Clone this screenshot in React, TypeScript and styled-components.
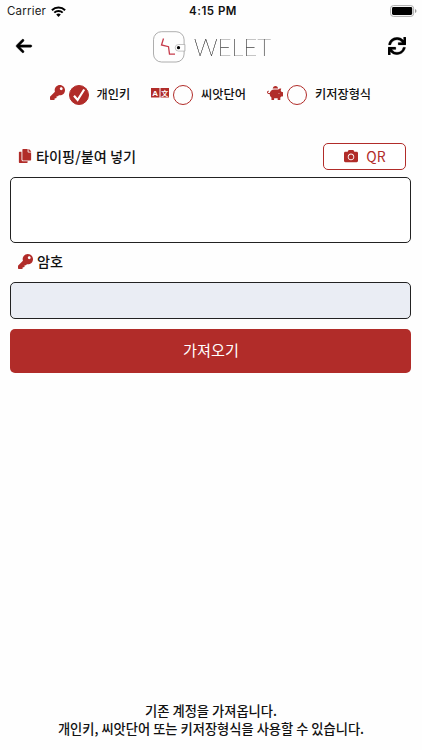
import React from 'react';
import styled, { createGlobalStyle } from 'styled-components';
import { FaKey, FaPiggyBank, FaCopy, FaCamera, FaSync } from 'react-icons/fa';
import { FaArrowLeft } from 'react-icons/fa6';

const RED = '#b12c29';

const GlobalStyle = createGlobalStyle`
  * { box-sizing: border-box; }
  body {
    margin: 0;
    background: #fefefe;
    color: #111;
    font-family: "Noto Sans CJK KR", sans-serif;
  }
  svg { display: block; flex: none; }
`;

const Screen = styled.main`
  width: 422px;
  height: 750px;
  display: flex;
  flex-direction: column;
  overflow: hidden;
`;

const StatusBar = styled.div`
  height: 22px;
  flex: none;
  display: grid;
  grid-template-columns: 1fr auto 1fr;
  align-items: center;
  padding: 0 5px 0 7px;
  font-family: Inter, sans-serif;
  font-size: 11.5px;
  line-height: 22px;
`;

const Carrier = styled.div`
  display: flex;
  align-items: center;
  gap: 5px;
  letter-spacing: 0.2px;
  color: #222;
`;

const Clock = styled.div`
  font-weight: 600;
  letter-spacing: 0.5px;
  padding-left: 2px;
`;

const Battery = styled.div`
  display: flex;
  justify-content: flex-end;
`;

const Header = styled.header`
  height: 50px;
  flex: none;
  display: flex;
  align-items: center;
  justify-content: space-between;
  padding: 0 16px 3px 15px;
`;

const IconButton = styled.button`
  border: 0;
  padding: 0;
  background: none;
  color: #000;
  font-size: 18px;
`;

const Brand = styled.div`
  display: flex;
  align-items: center;
  gap: 7px;
  padding: 2px 0 0 1px;
`;

const Options = styled.div`
  height: 46px;
  flex: none;
  display: flex;
  padding-left: 50px;
`;

const Option = styled.div<{ $width: number }>`
  width: ${({ $width }) => $width}px;
  display: flex;
  align-items: flex-start;
  padding-top: 13px;
  color: ${RED};
`;

const OptionIcon = styled.span<{ $drop?: number }>`
  padding-top: ${({ $drop = 0 }) => $drop}px;
`;

const Radio = styled.span<{ $checked?: boolean; $offset: number }>`
  width: 20px;
  height: 20px;
  margin: 0 8px 0 ${({ $offset }) => $offset}px;
  flex: none;
  border: 1px solid ${RED};
  border-radius: 50%;
  background: ${({ $checked }) => ($checked ? RED : 'transparent')};
`;

const OptionText = styled.span`
  font-size: 12.2px;
  font-weight: 500;
  line-height: 18px;
  color: #111;
  white-space: nowrap;
`;

const Form = styled.section`
  display: flex;
  flex-direction: column;
  padding: 25px 11px 0 10px;
`;

const FieldHead = styled.div<{ $height: number; $gap: number }>`
  height: ${({ $height }) => $height}px;
  margin-bottom: ${({ $gap }) => $gap}px;
  display: flex;
  align-items: center;
  justify-content: space-between;
  padding: 0 5px 0 8px;
`;

const Label = styled.label<{ $lift?: number }>`
  display: flex;
  align-items: center;
  gap: 4px;
  padding-bottom: ${({ $lift = 0 }) => $lift}px;
  font-size: 14.2px;
  font-weight: 500;
  line-height: 20px;
  svg { color: ${RED}; }
`;

const QrButton = styled.button`
  width: 83px;
  height: 27px;
  display: flex;
  align-items: center;
  justify-content: center;
  gap: 8px;
  padding: 0 0 2px 1px;
  border: 1px solid ${RED};
  border-radius: 5px;
  background: #fff;
  color: ${RED};
  font: 400 14px/20px "Noto Sans CJK KR", sans-serif;
`;

const KeyArea = styled.textarea`
  display: block;
  height: 66px;
  width: 100%;
  resize: none;
  border: 1px solid #222;
  border-radius: 5px;
  background: #fff;
`;

const PasswordInput = styled.input`
  height: 37px;
  width: 100%;
  border: 1px solid #222;
  border-radius: 5px;
  background: #eaedf4;
`;

const SubmitButton = styled.button`
  height: 44px;
  width: 100%;
  margin-top: 10px;
  padding: 0 0 4px 1px;
  border: 0;
  border-radius: 5px;
  background: ${RED};
  color: #fff;
  font: 400 15.2px/22px "Noto Sans CJK KR", sans-serif;
`;

const Footer = styled.footer`
  margin-top: auto;
  padding-bottom: 12px;
  text-align: center;
  font-size: 13.25px;
  font-weight: 500;
  line-height: 18px;
`;

const WifiIcon = () => (
  <svg width="15" height="11" viewBox="0 0 15 11" fill="none" stroke="#000" strokeWidth="2">
    <path d="M.9 4.2a9.4 9.4 0 0 1 13.2 0M3.3 6.6a6 6 0 0 1 8.4 0" />
    <path d="M5.2 8.6a3.3 3.3 0 0 1 4.6 0L7.5 10.9Z" fill="#000" stroke="none" />
  </svg>
);

const BatteryIcon = () => (
  <svg width="27" height="12" viewBox="0 0 27 12">
    <rect x=".6" y=".6" width="23" height="10.8" rx="2.8" fill="none" stroke="#aaa" />
    <rect x="2" y="2" width="20.2" height="8" rx="1.4" />
    <path d="M25 4c2 .7 2 3.3 0 4Z" fill="#999" />
  </svg>
);

const LogoIcon = () => (
  <svg width="33" height="32" viewBox="0 0 33 32" fill="none">
    <rect x=".5" y=".7" width="30.6" height="30.3" rx="8" stroke="#999" strokeWidth=".8" />
    <path d="M10.5 7.5 8.5 14l7 1.7 1 7.5H22" stroke="#c63b4b" strokeWidth="1.3" />
    <path d="M31.5 13.5h-6a3.3 3.3 0 0 0 0 6.6h6Z" fill="#fff" />
    <path d="M32 13.5h-6.5a3.3 3.3 0 0 0 0 6.6H32Z" stroke="#aaa" strokeWidth=".7" />
    <circle cx="25.5" cy="16.7" r="1.6" fill="#000" />
  </svg>
);

const Wordmark = styled.span`
  width: 77px;
  padding-left: 1px;
  font: 100 23.5px/32px Lato, sans-serif;
  letter-spacing: 0.2px;
  color: #222;
  -webkit-text-stroke: 0.2px #222;
  white-space: nowrap;
  will-change: transform;
`;

const LanguageIcon = () => (
  <svg width="18" height="10" viewBox="0 0 18 10">
    <path d="M0 0h8.5v9.5H0ZM9.5 0H18v9.5H9.5Z" fill={RED} />
    <text x="4.25" y="7.7" textAnchor="middle" fontFamily="Liberation Sans" fontWeight="700" fontSize="8" fill="#fff">A</text>
    <text x="13.75" y="7.5" textAnchor="middle" fontFamily="Noto Sans CJK SC" fontWeight="700" fontSize="7" fill="#fff">文</text>
  </svg>
);

const CheckIcon = () => (
  <svg width="18" height="18" viewBox="0 0 18 18" fill="none" stroke="#fff" strokeWidth="2.2">
    <path d="m4 9.8 3.6 4.2 6.6-10.5" />
  </svg>
);

export default function App() {
  return (
    <>
      <GlobalStyle />
      <Screen>
        <StatusBar>
          <Carrier>Carrier <WifiIcon /></Carrier>
          <Clock>4:15 PM</Clock>
          <Battery><BatteryIcon /></Battery>
        </StatusBar>
        <Header>
          <IconButton aria-label="뒤로">
            <FaArrowLeft stroke="currentColor" strokeWidth={14} />
          </IconButton>
          <Brand><LogoIcon /><Wordmark>WELET</Wordmark></Brand>
          <IconButton aria-label="새로고침">
            <FaSync stroke="currentColor" strokeWidth={6} />
          </IconButton>
        </Header>
        <Options>
          <Option $width={101}>
            <OptionIcon><FaKey size={15} /></OptionIcon>
            <Radio $checked $offset={3.5}><CheckIcon /></Radio>
            <OptionText>개인키</OptionText>
          </Option>
          <Option $width={116}>
            <OptionIcon $drop={3}><LanguageIcon /></OptionIcon>
            <Radio $offset={4} />
            <OptionText>씨앗단어</OptionText>
          </Option>
          <Option $width={110}>
            <OptionIcon><FaPiggyBank size={16} /></OptionIcon>
            <Radio $offset={4} />
            <OptionText>키저장형식</OptionText>
          </Option>
        </Options>
        <Form>
          <FieldHead $height={27} $gap={7}>
            <Label htmlFor="key" $lift={1}><FaCopy size={14} />타이핑/붙여 넣기</Label>
            <QrButton><FaCamera size={14} />QR</QrButton>
          </FieldHead>
          <KeyArea id="key" />
          <FieldHead $height={36} $gap={3}>
            <Label htmlFor="password"><FaKey size={15} />암호</Label>
          </FieldHead>
          <PasswordInput id="password" type="password" />
          <SubmitButton>가져오기</SubmitButton>
        </Form>
        <Footer>
          <div>기존 계정을 가져옵니다.</div>
          <div>개인키, 씨앗단어 또는 키저장형식을 사용할 수 있습니다.</div>
        </Footer>
      </Screen>
    </>
  );
}
